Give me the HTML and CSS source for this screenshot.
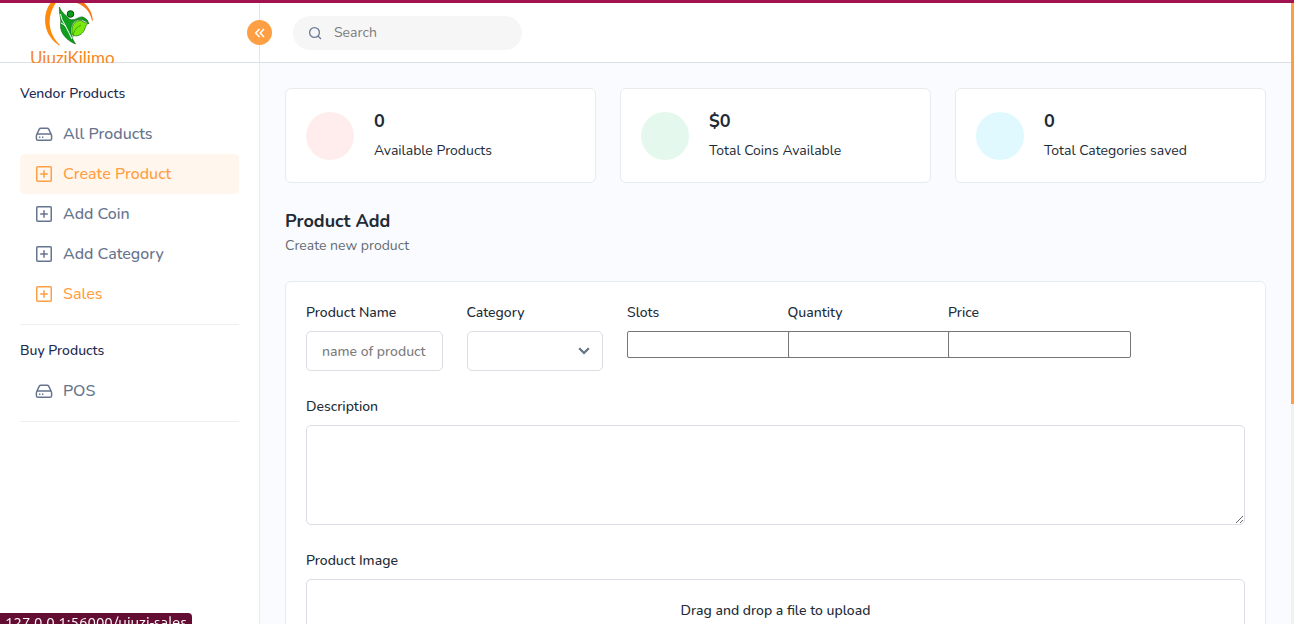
FILE: index.html
```html
<!DOCTYPE html>
<html lang="en">
<head>
<meta charset="utf-8">
<meta name="viewport" content="width=device-width, initial-scale=1">
<title>UjuziKilimo - Product Add</title>
<link rel="stylesheet" href="styles.css">
</head>
<body>
<svg class="sprite" aria-hidden="true">
  <symbol id="icon-drive" viewBox="0 0 18 18">
    <path d="M1.500 10 4.300 4.200Q4.800 3.200 5.800 3.200H12.200Q13.200 3.200 13.700 4.200L16.500 10M3 8.900H15Q16.600 8.900 16.600 10.500V13.700Q16.600 15.300 15 15.300H3Q1.400 15.300 1.400 13.700V10.500Q1.400 8.900 3 8.900Z" fill="none" stroke="currentColor" stroke-width="1.500" stroke-linejoin="round"/>
    <path d="M4 12.200h1.400M7 12.200h1.400" stroke="currentColor" stroke-width="1.500"/>
  </symbol>
  <symbol id="icon-plus" viewBox="0 0 18 18">
    <rect x="1.750" y="1.750" width="14.500" height="14.500" rx="1" fill="none" stroke="currentColor" stroke-width="1.500"/>
    <path d="M9 5.200v7.600M5.200 9h7.600" stroke="currentColor" stroke-width="1.500"/>
  </symbol>
</svg>
<div class="app">
  <header class="topbar">
    <div class="brand">
      <a class="logo" href="#">
        <svg class="logo-mark" viewBox="0 0 52 46" aria-hidden="true">
          <path d="M9 -3C-2 8 -3 30 15 42.500L16 42C2 29 3 10 14 -3Z" fill="#ff8a0a"/>
          <path d="M36 -3C43 1 48 8 49 17.500H48C46 9 42 4 33 0Z" fill="#f4791c"/>
          <path d="M15.400 4C18 11 23 12 25 16C31 19 34 13 39 14Q44 16 45 21Q39 15 33 17Q28 19 27 25Q26 33 31.500 41C24 38 16 31 16.500 22Q17 19 16.500 15Q15 9 15.400 4Z" fill="#0f9f1c" stroke="#075c0c" stroke-width=".6"/>
          <path d="M16.500 11Q17 16 21 22Q25 30 28 36M17 20Q20 21 22 24" fill="none" stroke="#fff" stroke-width="1"/>
          <circle cx="26.500" cy="11" r="3.300" fill="#0b9d19" stroke="#064d0a" stroke-width="1"/>
          <path d="M28.500 32C26.500 24 30 17 37 17.500Q41 20 44 20.500C41 22 42 25 39.500 28.500C37 32.500 32 34 28.500 32Z" fill="#7be70d" stroke="#26851c" stroke-width=".8"/>
          <path d="M29 34Q29 26 37 22" fill="none" stroke="#2b9b13" stroke-width=".8"/>
        </svg>
        <span class="logo-name">UjuziKilimo</span>
      </a>
      <button class="collapse" type="button" aria-label="Collapse sidebar">
        <svg viewBox="0 0 12 12" width="12" height="12" aria-hidden="true"><path d="M5.500 2 1.700 6l3.800 4M10 2 6.200 6 10 10" fill="none" stroke="currentColor" stroke-width="1.500"/></svg>
      </button>
    </div>
    <form class="search" role="search">
      <svg class="search-icon" viewBox="0 0 14 14" aria-hidden="true"><circle cx="6.500" cy="6.500" r="4.900" fill="none" stroke="currentColor" stroke-width="1.300"/><path d="m10 10 3 3" stroke="currentColor" stroke-width="1.300"/></svg>
      <input class="search-input" type="search" placeholder="Search" aria-label="Search">
    </form>
  </header>

  <aside class="sidebar">
    <nav class="nav-group" aria-labelledby="nav-vendor">
      <h2 class="nav-title" id="nav-vendor">Vendor Products</h2>
      <a class="nav-link" href="#"><svg class="nav-icon"><use href="#icon-drive"/></svg>All Products</a>
      <a class="nav-link nav-link-active" href="#" aria-current="page"><svg class="nav-icon"><use href="#icon-plus"/></svg>Create Product</a>
      <a class="nav-link" href="#"><svg class="nav-icon"><use href="#icon-plus"/></svg>Add Coin</a>
      <a class="nav-link" href="#"><svg class="nav-icon"><use href="#icon-plus"/></svg>Add Category</a>
      <a class="nav-link nav-link-hover" href="#"><svg class="nav-icon"><use href="#icon-plus"/></svg>Sales</a>
    </nav>
    <nav class="nav-group" aria-labelledby="nav-buy">
      <h2 class="nav-title" id="nav-buy">Buy Products</h2>
      <a class="nav-link" href="#"><svg class="nav-icon"><use href="#icon-drive"/></svg>POS</a>
    </nav>
  </aside>

  <main class="content">
    <section class="stats">
      <article class="stat"><span class="stat-dot dot-red"></span><div><h3 class="stat-value">0</h3><p class="stat-label">Available Products</p></div></article>
      <article class="stat"><span class="stat-dot dot-green"></span><div><h3 class="stat-value">$0</h3><p class="stat-label">Total Coins Available</p></div></article>
      <article class="stat"><span class="stat-dot dot-cyan"></span><div><h3 class="stat-value">0</h3><p class="stat-label">Total Categories saved</p></div></article>
    </section>
    <div class="page-head">
      <h1 class="page-title">Product Add</h1>
      <p class="page-subtitle">Create new product</p>
    </div>
    <form class="product-form">
      <div class="fields">
        <div class="field"><label class="label" for="name">Product Name</label><input class="control" id="name" type="text" placeholder="name of product"></div>
        <div class="field"><label class="label" for="category">Category</label>
          <div class="select-wrap"><select class="control select" id="category"><option></option></select><svg class="chevron" viewBox="0 0 12 8" aria-hidden="true"><path d="m1.200 1.200 4.800 4.800 4.800-4.800" fill="none" stroke="currentColor" stroke-width="2.200"/></svg></div></div>
        <div class="field"><label class="label" for="slots">Slots</label><input class="plain" id="slots" type="text"></div>
        <div class="field"><label class="label" for="quantity">Quantity</label><input class="plain" id="quantity" type="text"></div>
        <div class="field"><label class="label" for="price">Price</label><input class="plain" id="price" type="text"></div>
      </div>
      <div class="field"><label class="label" for="description">Description</label><textarea class="control description" id="description"></textarea></div>
      <div class="field"><label class="label" for="image">Product Image</label>
        <div class="upload"><input class="upload-input" id="image" type="file"><span>Drag and drop a file to upload</span></div></div>
    </form>
  </main>
</div>
<div class="scroll-track"><div class="scroll-thumb"></div></div>
<div class="link-status">127.0.0.1:56000/ujuzi-sales</div>
</body>
</html>
```
FILE: styles.css
```css
* { box-sizing: border-box; }

body {
  margin: 0;
  height: 100vh;
  overflow: hidden;
  border-top: 3px solid #a0134e;
  background: #fafbfe;
  color: #212b36;
  font: 14px/22px Nunito, "Noto Sans", sans-serif;
}

h1, h2, h3, p { margin: 0; }
a { text-decoration: none; }
input, select, textarea, button { font: inherit; color: inherit; }

.sprite { position: absolute; width: 0; height: 0; }

.app {
  display: grid;
  grid-template-columns: 260px 1fr;
  grid-template-rows: 60px 1fr;
  height: 100%;
  padding-right: 3px;
}

.topbar {
  grid-column: 1 / -1;
  display: grid;
  grid-template-columns: 260px 1fr;
  align-items: center;
  background: #fff;
  border-bottom: 1px solid #dbe0e6;
}

.brand {
  position: relative;
  height: 59px;
  border-right: 1px solid #e3e6ea;
}

.logo {
  display: flex;
  flex-direction: column;
  width: 86px;
  height: 60px;
  margin-left: 30px;
  overflow: hidden;
  color: #f7861f;
}

.logo-mark { flex: none; width: 52px; height: 46px; margin-left: 14px; }
.logo-name { font: 400 17px/17px Lato, sans-serif; }

.collapse {
  position: absolute;
  top: 17px;
  right: -13px;
  display: flex;
  align-items: center;
  justify-content: center;
  width: 25px;
  height: 25px;
  padding: 0;
  border: 0;
  border-radius: 50%;
  background: #ff9f43;
  color: #fff;
}

.search {
  display: flex;
  align-items: center;
  gap: 12px;
  width: 229px;
  height: 34px;
  margin-left: 33px;
  padding: 0 15px;
  border-radius: 17px;
  background: #f6f6f6;
}
.search-icon { flex: none; width: 14px; height: 14px; color: #6c7a97; }
.search-input {
  width: 100%;
  padding: 0;
  border: 0;
  outline: 0;
  background: none;
}
::placeholder { color: #7b7b7b; opacity: 1; }

.sidebar {
  padding: 20px;
  overflow: hidden;
  background: #fff;
  border-right: 1px solid #e8ebed;
}
.nav-group {
  margin-bottom: 15px;
  padding-bottom: 10px;
  border-bottom: 1px solid #eee;
}
.nav-title { margin-bottom: 9px; font-size: 14px; font-weight: 500; color: #1b2850; }
.nav-link {
  display: flex;
  align-items: center;
  gap: 10px;
  height: 40px;
  padding: 0 15px;
  border-radius: 5px;
  color: #67748e;
  font-size: 16px;
  font-weight: 500;
}
.nav-icon { width: 18px; height: 18px; }
.nav-link-active { background: #fff6ee; color: #ff9f43; }
.nav-link-hover { color: #ff9f43; }

.content { padding: 25px; overflow: hidden; }

.stats { display: grid; grid-template-columns: repeat(3, 1fr); gap: 24px; }
.stat {
  display: flex;
  align-items: center;
  gap: 20px;
  padding: 21px 20px 20px;
  background: #fff;
  border: 1px solid #e8ebed;
  border-radius: 6px;
}
.stat-dot { width: 48px; height: 48px; border-radius: 50%; }
.dot-red { background: #ffeded; }
.dot-green { background: #e4f8ed; }
.dot-cyan { background: #e0f9fe; }
.stat-value { margin-bottom: 8px; font-size: 18px; font-weight: 700; }

.page-head { padding: 27px 0 24px; }
.page-title { margin-bottom: 3px; font-size: 18px; font-weight: 700; }
.page-subtitle { color: #646b72; }

.product-form {
  display: grid;
  gap: 25px;
  padding: 20px;
  background: #fff;
  border: 1px solid #e8ebed;
  border-radius: 6px;
}
.fields { display: grid; grid-template-columns: repeat(6, minmax(0, 1fr)); gap: 24px; }
.label { display: block; margin-bottom: 7px; font-weight: 500; }
.control {
  display: block;
  width: 100%;
  height: 40px;
  padding: 0 15px;
  background: #fff;
  border: 1px solid #dadde3;
  border-radius: 5px;
  font-weight: 500;
}
.select-wrap { display: grid; align-items: center; }
.select, .chevron { grid-area: 1 / 1; }
.select { appearance: none; }
.chevron { z-index: 1; justify-self: end; width: 12px; height: 8px; margin-right: 13px; color: #637381; pointer-events: none; }
.plain {
  display: block;
  width: 183px;
  height: 27px;
  padding: 1px 2px;
  background: #fff;
  border: 1px solid #767676;
  border-radius: 2px;
}
.description { height: 100px; resize: vertical; }
.upload {
  position: relative;
  height: 150px;
  padding-top: 20px;
  border: 1px solid #dadde3;
  border-radius: 5px;
  font-weight: 500;
  text-align: center;
}
.upload-input { position: absolute; inset: 0; width: 100%; height: 100%; opacity: 0; }

.scroll-track { position: fixed; top: 3px; right: 0; bottom: 0; width: 3px; background: #f1f1f1; }
.scroll-thumb { height: 401px; background: #ff9f43; }

.link-status {
  position: fixed;
  left: 0;
  top: 613px;
  height: 24px;
  padding: 0 5px;
  border-top-right-radius: 4px;
  background: #630d33;
  color: #fff;
  font: 15px/20px Ubuntu, "Noto Sans", sans-serif;
}
```
